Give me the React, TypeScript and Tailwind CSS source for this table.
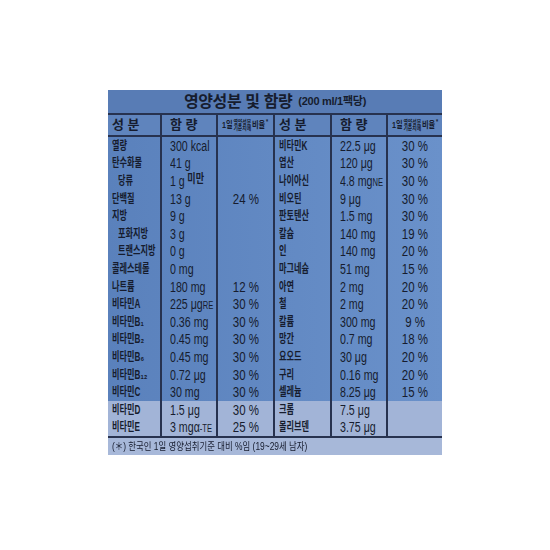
const left: [string, string, string, boolean?][] = [
  ["열량", "300 kcal", ""],
  ["탄수화물", "41 g", ""],
  ["당류", "1 g 미만", "", true],
  ["단백질", "13 g", "24 %"],
  ["지방", "9 g", ""],
  ["포화지방", "3 g", "", true],
  ["트랜스지방", "0 g", "", true],
  ["콜레스테롤", "0 mg", ""],
  ["나트륨", "180 mg", "12 %"],
  ["비타민A", "225 μgRE", "30 %"],
  ["비타민B₁", "0.36 mg", "30 %"],
  ["비타민B₂", "0.45 mg", "30 %"],
  ["비타민B₆", "0.45 mg", "30 %"],
  ["비타민B₁₂", "0.72 μg", "30 %"],
  ["비타민C", "30 mg", "30 %"],
  ["비타민D", "1.5 μg", "30 %"],
  ["비타민E", "3 mgα-TE", "25 %"],
];

const right: [string, string, string][] = [
  ["비타민K", "22.5 μg", "30 %"],
  ["엽산", "120 μg", "30 %"],
  ["나이아신", "4.8 mgNE", "30 %"],
  ["비오틴", "9 μg", "30 %"],
  ["판토텐산", "1.5 mg", "30 %"],
  ["칼슘", "140 mg", "19 %"],
  ["인", "140 mg", "20 %"],
  ["마그네슘", "51 mg", "15 %"],
  ["아연", "2 mg", "20 %"],
  ["철", "2 mg", "20 %"],
  ["칼륨", "300 mg", "9 %"],
  ["망간", "0.7 mg", "18 %"],
  ["요오드", "30 μg", "20 %"],
  ["구리", "0.16 mg", "20 %"],
  ["셀레늄", "8.25 μg", "15 %"],
  ["크롬", "7.5 μg", ""],
  ["몰리브덴", "3.75 μg", ""],
];

const line = "border-r-2 border-[#27324f]";

function Name({ text, indent }: { text: string; indent?: boolean }) {
  return (
    <div className={`${line} flex items-center pl-1`}>
      <span
        className={`inline-block origin-left scale-x-[0.68] whitespace-nowrap text-[12px] font-bold leading-none ${indent ? "ml-1.5" : ""}`}
      >
        {text}
      </span>
    </div>
  );
}

function Value({ text }: { text: string }) {
  // small unit suffixes like "RE", "NE", "미만"
  const m = text.match(/^(.*?)(RE|NE| 미만|-TE)?$/);
  const main = m ? m[1] : text;
  const tail = m && m[2] ? m[2] : "";
  const big = tail === " 미만";
  return (
    <div className={`${line} flex items-center pl-2`}>
      <span className="inline-block origin-left scale-x-[0.76] whitespace-nowrap text-[14px] leading-none">
        {main}
        {tail ? (
          <span className={big ? "relative -top-[3px] text-[12px] font-bold" : "text-[10px]"}>{tail}</span>
        ) : null}
      </span>
    </div>
  );
}

function Pct({ text, last }: { text: string; last?: boolean }) {
  return (
    <div className={`${last ? "" : line} flex items-center justify-center`}>
      <span className="inline-block scale-x-[0.82] whitespace-nowrap text-[14px] leading-none">{text}</span>
    </div>
  );
}

function HeadRate({ last }: { last?: boolean }) {
  return (
    <div className={`${last ? "" : line} flex items-center pl-1`}>
      <span className="inline-flex origin-left scale-x-[0.8] items-center gap-[1px] whitespace-nowrap text-[9px] font-bold leading-none">
        <span>1일</span>
        <span className="flex flex-col text-[6px] leading-[6px]">
          <span>영양성분</span>
          <span>기준치에</span>
        </span>
        <span>비율</span>
        <span className="-mt-2 text-[7px]">*</span>
      </span>
    </div>
  );
}

export default function App() {
  const cols = "grid grid-cols-[54px_56px_57px_57px_56px_54px]";
  return (
    <div className="flex h-[550px] w-[550px] bg-white pl-[108px] pt-[90px]">
      <div
        className="w-[334px] blur-[0.35px] text-[#161c2e]"
        style={{ fontFamily: '"Liberation Sans", "Noto Sans CJK KR", sans-serif' }}
      >
        <div className="flex h-[25px] items-center justify-center gap-1.5 border-b-2 border-[#27324f] bg-[#587cb5]">
          <span className="text-[16px] font-bold tracking-tight">영양성분 및 함량</span>
          <span className="text-[11px] font-bold tracking-tight">(200 ml/1팩당)</span>
        </div>
        <div className={`${cols} h-[22px] border-b-2 border-[#27324f] bg-[#5f84bd]`}>
          <div className={`${line} flex items-center pl-1 text-[13px] font-bold`}>성 분</div>
          <div className={`${line} flex items-center pl-2 text-[13px] font-bold`}>함 량</div>
          <HeadRate />
          <div className={`${line} flex items-center pl-1 text-[13px] font-bold`}>성 분</div>
          <div className={`${line} flex items-center pl-2 text-[13px] font-bold`}>함 량</div>
          <HeadRate last />
        </div>
        <div className="border-b-2 border-[#27324f]">
          {left.map((l, i) => {
            const r = right[i];
            const bg = i >= 15 ? "bg-[#a2b4d7]" : "bg-gradient-to-r from-[#5a81bc] to-[#6a91ca]";
            return (
              <div key={i} className={`${cols} h-[17.6px] ${bg}`}>
                <Name text={l[0]} indent={l[3]} />
                <Value text={l[1]} />
                <Pct text={l[2]} />
                <Name text={r[0]} />
                <Value text={r[1]} />
                <Pct text={r[2]} last />
              </div>
            );
          })}
        </div>
        <div className="flex h-[17px] items-center bg-[#a7b8d9] pl-1">
          <span className="inline-block origin-left scale-x-[0.8] whitespace-nowrap text-[10.5px] leading-none">
            (＊) 한국인 1일 영양섭취기준 대비 %임 (19~29세 남자)
          </span>
        </div>
      </div>
    </div>
  );
}
